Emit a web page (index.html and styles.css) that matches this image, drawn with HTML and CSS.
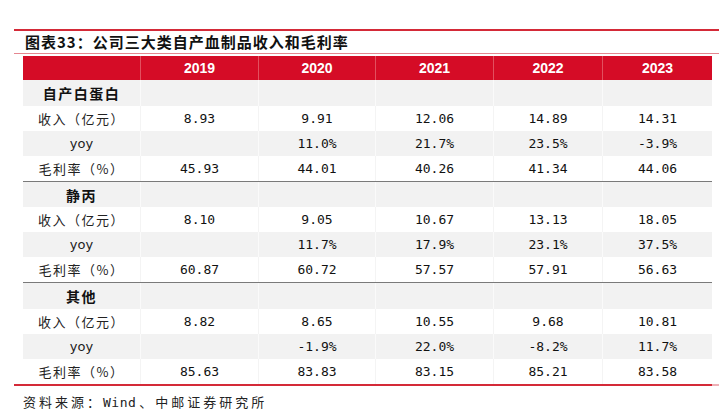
FILE: index.html
```html
<!DOCTYPE html>
<html lang="zh">
<head>
<meta charset="utf-8">
<title>图表33</title>
<link rel="stylesheet" href="styles.css">
</head>
<body>
<div class="page">
  <div class="rule-top"></div>
  <div class="title">图表33：公司三大类自产血制品收入和毛利率</div>
  <div class="rule-title"></div>
  <div class="table">
    <div class="row head">
      <div class="cell"></div>
      <div class="cell">2019</div>
      <div class="cell">2020</div>
      <div class="cell">2021</div>
      <div class="cell">2022</div>
      <div class="cell">2023</div>
    </div>

    <div class="row cat gray tall">
      <div class="cell label">自产白蛋白</div>
      <div class="cell"></div><div class="cell"></div><div class="cell"></div><div class="cell"></div><div class="cell"></div>
    </div>
    <div class="row">
      <div class="cell label">收入（亿元）</div>
      <div class="cell">8.93</div><div class="cell">9.91</div><div class="cell">12.06</div><div class="cell">14.89</div><div class="cell">14.31</div>
    </div>
    <div class="row gray">
      <div class="cell label yoy">yoy</div>
      <div class="cell"></div><div class="cell">11.0%</div><div class="cell">21.7%</div><div class="cell">23.5%</div><div class="cell">-3.9%</div>
    </div>
    <div class="row">
      <div class="cell label">毛利率（%）</div>
      <div class="cell">45.93</div><div class="cell">44.01</div><div class="cell">40.26</div><div class="cell">41.34</div><div class="cell">44.06</div>
    </div>

    <div class="row cat gray sep">
      <div class="cell label">静丙</div>
      <div class="cell"></div><div class="cell"></div><div class="cell"></div><div class="cell"></div><div class="cell"></div>
    </div>
    <div class="row">
      <div class="cell label">收入（亿元）</div>
      <div class="cell">8.10</div><div class="cell">9.05</div><div class="cell">10.67</div><div class="cell">13.13</div><div class="cell">18.05</div>
    </div>
    <div class="row gray">
      <div class="cell label yoy">yoy</div>
      <div class="cell"></div><div class="cell">11.7%</div><div class="cell">17.9%</div><div class="cell">23.1%</div><div class="cell">37.5%</div>
    </div>
    <div class="row">
      <div class="cell label">毛利率（%）</div>
      <div class="cell">60.87</div><div class="cell">60.72</div><div class="cell">57.57</div><div class="cell">57.91</div><div class="cell">56.63</div>
    </div>

    <div class="row cat gray sep tall">
      <div class="cell label">其他</div>
      <div class="cell"></div><div class="cell"></div><div class="cell"></div><div class="cell"></div><div class="cell"></div>
    </div>
    <div class="row">
      <div class="cell label">收入（亿元）</div>
      <div class="cell">8.82</div><div class="cell">8.65</div><div class="cell">10.55</div><div class="cell">9.68</div><div class="cell">10.81</div>
    </div>
    <div class="row gray">
      <div class="cell label yoy">yoy</div>
      <div class="cell"></div><div class="cell">-1.9%</div><div class="cell">22.0%</div><div class="cell">-8.2%</div><div class="cell">11.7%</div>
    </div>
    <div class="row">
      <div class="cell label">毛利率（%）</div>
      <div class="cell">85.63</div><div class="cell">83.83</div><div class="cell">83.15</div><div class="cell">85.21</div><div class="cell">83.58</div>
    </div>
  </div>
  <div class="rule-bottom"></div>
  <div class="source">资料来源：<span class="latin">Wind</span>、中邮证券研究所</div>
</div>
</body>
</html>
```

FILE: styles.css
```css
html, body {
  margin: 0;
  padding: 0;
  background: #ffffff;
}

.page {
  width: 719px;
  height: 419px;
  padding-top: 29px;
  box-sizing: border-box;
  font-family: "DejaVu Sans Mono", "Noto Sans CJK SC", monospace;
  color: #111111;
}

.rule-top {
  margin-left: 14px;
  height: 2px;
  background: #d42a38;
}

.title {
  margin-left: 25px;
  height: 22px;
  line-height: 22px;
  font-family: "Noto Sans CJK SC", sans-serif;
  font-weight: 700;
  font-size: 15px;
  letter-spacing: 1px;
  color: #111111;
}

.rule-title {
  margin-left: 14px;
  height: 1px;
  background: #e58690;
  margin-bottom: 2px;
}

.table {
  margin-left: 23px;
  width: 689px;
}

.row {
  display: grid;
  grid-template-columns: 117px 118px 117px 118px 109px 110px;
  height: 25px;
  background: #ffffff;
}

.row.gray {
  background: #f2f2f2;
}

.row.tall {
  height: 26px;
}

.row.sep {
  border-top: 1px solid #7a7a7a;
}

.cell {
  display: flex;
  align-items: center;
  justify-content: center;
  font-size: 13px;
  white-space: nowrap;
}

.row .cell + .cell {
  border-left: 1px solid #f4f4f4;
}

.row.gray .cell + .cell {
  border-left: 1px solid #fafafa;
}

.row.head {
  height: 24px;
  background: #d50c26;
}

.row.head .cell {
  color: #ffffff;
  font-family: "Liberation Sans", Arial, sans-serif;
  font-weight: 700;
  font-size: 14px;
}

.row.head .cell + .cell {
  border-left: 1px solid #e2505f;
}

.label {
  font-family: "Noto Sans CJK SC", sans-serif;
  font-size: 13px;
  letter-spacing: 1.5px;
  color: #222222;
}

.label.yoy {
  font-family: "DejaVu Sans", sans-serif;
  letter-spacing: 0;
}

.row.cat .label {
  font-weight: 700;
  font-size: 14px;
  color: #111111;
}

.rule-bottom {
  margin-left: 14px;
  height: 2px;
  background: linear-gradient(to right, #d42a38 698px, #eeb0b6 698px);
}

.source {
  margin-left: 23px;
  margin-top: 5px;
  height: 22px;
  line-height: 22px;
  font-family: "Noto Sans CJK SC", sans-serif;
  font-size: 13px;
  letter-spacing: 3px;
  color: #222222;
}

.source .latin {
  font-family: "DejaVu Sans Mono", monospace;
  letter-spacing: 0.5px;
  margin-right: 3px;
}
```
